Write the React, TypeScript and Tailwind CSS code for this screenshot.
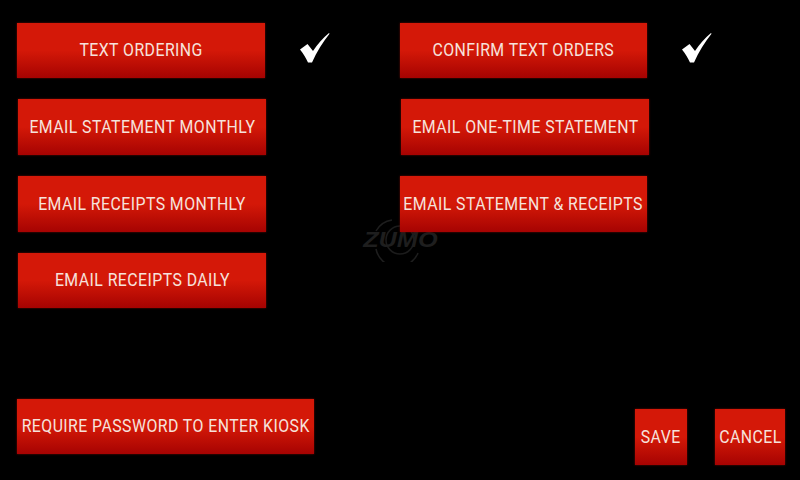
import React from 'react';

const base =
  'flex items-center justify-center shrink-0 whitespace-nowrap text-[18px] font-[450] tracking-[0.5px] text-[#f6e2dc] bg-gradient-to-b from-[#d41808] from-50% to-[#a60302] shadow-[0_0_2px_#6b0a05] font-["Roboto",sans-serif]';

const RedButton: React.FC<{ label: string; className: string }> = ({ label, className }) => (
  <div className={`${base} ${className}`}>
    <span className="inline-block scale-x-[0.88] -translate-y-[1.5px]">{label}</span>
  </div>
);

const Check: React.FC<{ className?: string }> = ({ className }) => (
  <svg viewBox="0 0 30 32" className={`w-[30px] h-[32px] shrink-0 ${className ?? ''}`}>
    <path d="M0 16.5 L7.5 11 L13 18 C17 11.5 23 5 29 0 L29.5 0.8 C23 9 16.5 19 12 29.5 L8 29.5 C6 25 3.5 21 0 16.5 Z" fill="#fff" />
  </svg>
);

const App: React.FC = () => {
  return (
    <div className="relative w-[800px] h-[480px] overflow-hidden bg-black flex flex-col pt-[23px] pl-[17px]">
      {/* watermark sits behind the buttons */}
      <div className="absolute left-[362px] top-[218px] w-[76px] h-[44px]">
        <svg viewBox="0 0 76 44" className="absolute inset-0 w-full h-full">
          <path d="M14 13 A22 22 0 0 1 30 2" fill="none" stroke="#1e1e1e" strokeWidth="1.5" />
          <path d="M14 31 A22 22 0 0 0 56 35" fill="none" stroke="#1e1e1e" strokeWidth="1.5" />
          <circle cx="38" cy="22" r="14" fill="none" stroke="#1c1c1c" strokeWidth="1.5" />
        </svg>
        <span className='absolute inset-0 flex items-center justify-center text-[22px] leading-none font-black italic text-[#1e1e1e] font-["Liberation_Sans",sans-serif]'>
          <span className="inline-block scale-x-[1.15]">ZUMO</span>
        </span>
      </div>

      <div className="relative flex items-start h-[55px]">
        <RedButton label="TEXT ORDERING" className="w-[248px] h-[55px]" />
        <Check className="ml-[35px] mt-[10px]" />
        <RedButton label="CONFIRM TEXT ORDERS" className="ml-[70px] w-[247px] h-[55px]" />
        <Check className="ml-[35px] mt-[10px]" />
      </div>
      <div className="relative flex items-start mt-[21px] ml-px">
        <RedButton label="EMAIL STATEMENT MONTHLY" className="w-[248px] h-[56px]" />
        <RedButton label="EMAIL ONE-TIME STATEMENT" className="ml-[135px] w-[248px] h-[56px]" />
      </div>
      <div className="relative flex items-start mt-[21px] ml-px">
        <RedButton label="EMAIL RECEIPTS MONTHLY" className="w-[248px] h-[56px]" />
        <RedButton label="EMAIL STATEMENT & RECEIPTS" className="ml-[134px] w-[247px] h-[56px]" />
      </div>
      <div className="relative flex items-start mt-[21px] ml-px">
        <RedButton label="EMAIL RECEIPTS DAILY" className="w-[248px] h-[55px]" />
      </div>
      <div className="relative flex items-start mt-[91px]">
        <RedButton label="REQUIRE PASSWORD TO ENTER KIOSK" className="w-[297px] h-[55px]" />
        <RedButton label="SAVE" className="ml-[321px] mt-[10px] w-[52px] h-[56px]" />
        <RedButton label="CANCEL" className="ml-[28px] mt-[10px] w-[70px] h-[56px]" />
      </div>
    </div>
  );
};

export default App;
